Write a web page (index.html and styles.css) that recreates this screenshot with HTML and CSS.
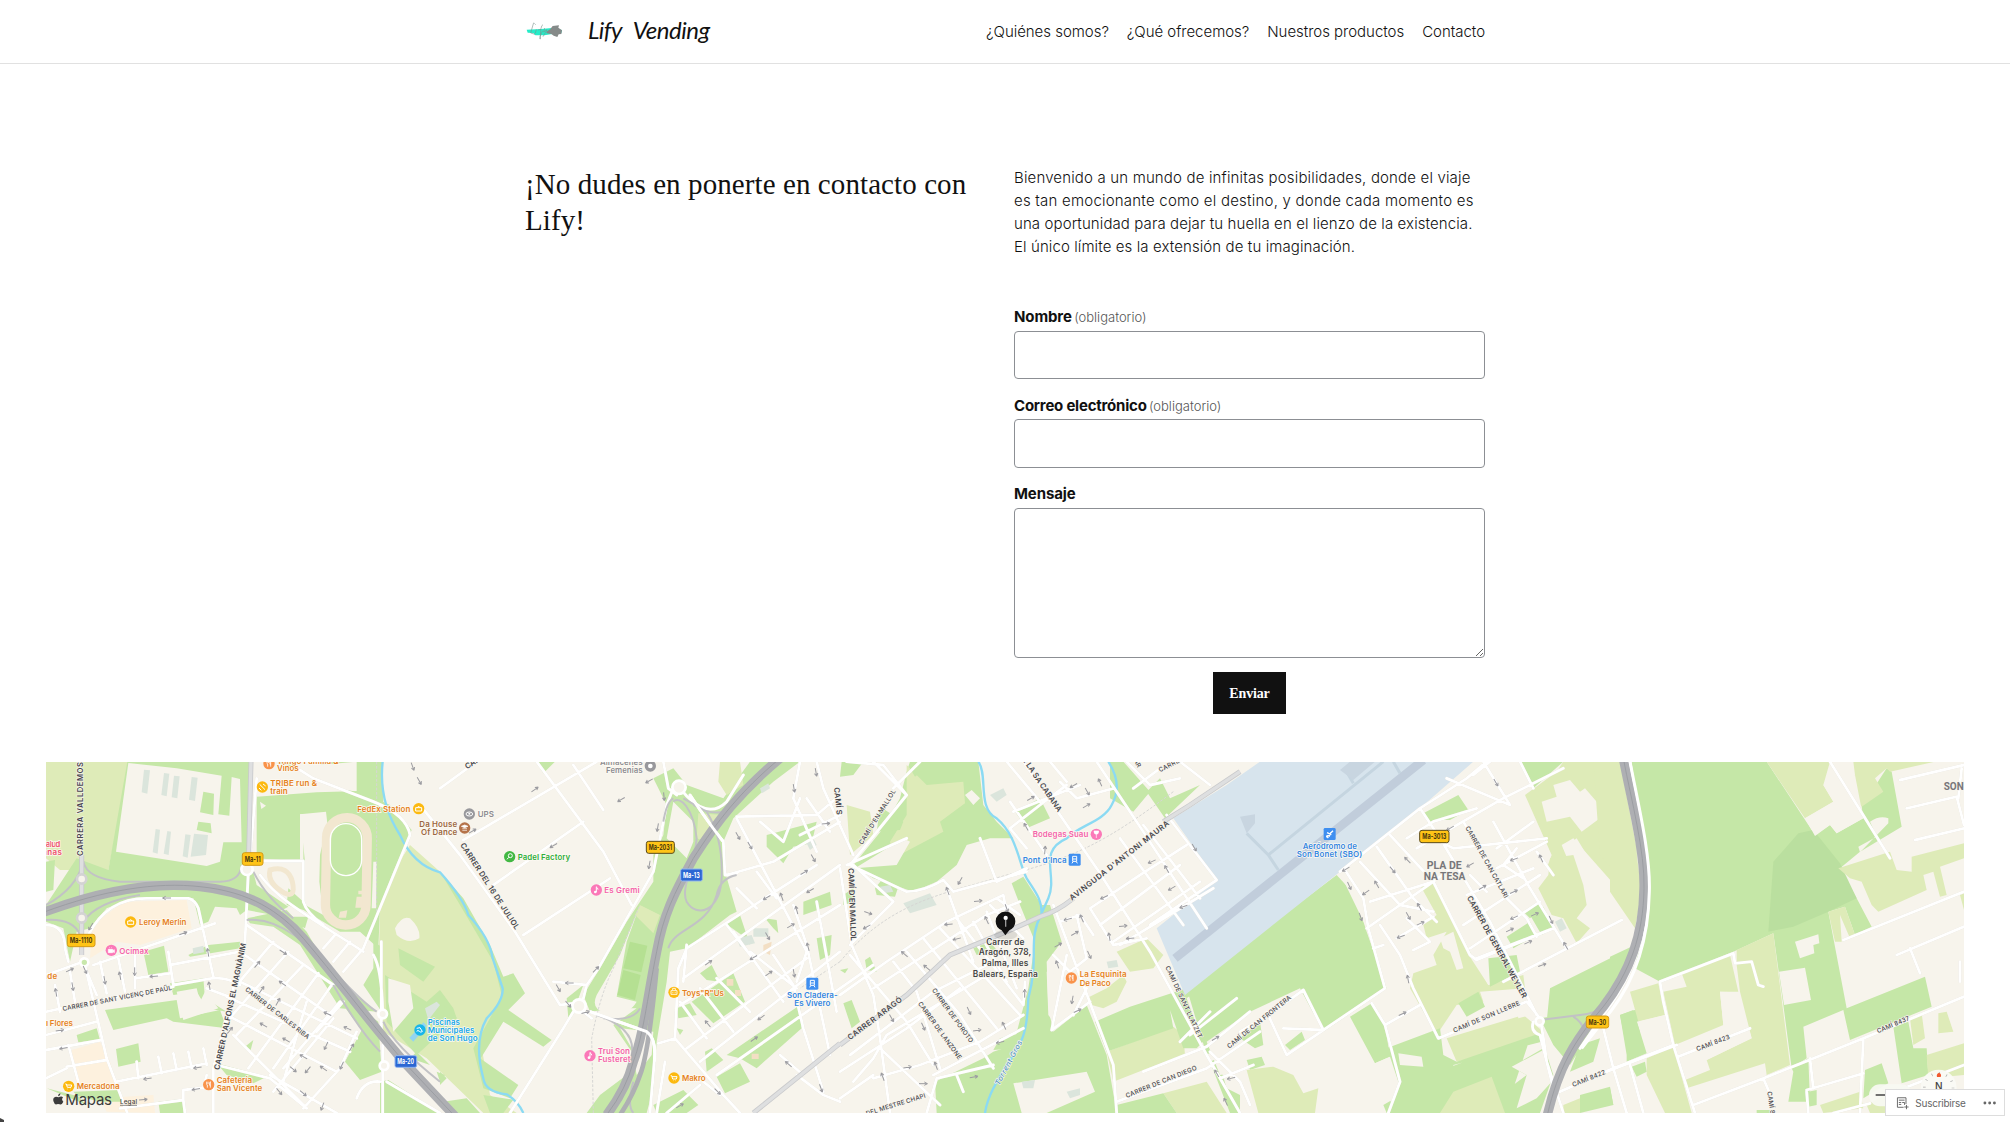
FILE: index.html
```html
<!DOCTYPE html>
<html lang="es">
<head>
<meta charset="utf-8">
<title>Contacto – Lify Vending</title>
<link rel="stylesheet" href="styles.css">
</head>
<body>
<header class="site-header">
  <div class="wrap header-row">
    <a class="brand">
      <svg class="logo" width="37" height="24" viewBox="0 0 111 72">
        <path d="M2 29L45 27L78 24L108 30L106 39L74 43L55 46L28 46L22 39L5 38Z" fill="#25ecc8"/>
        <path d="M61 35L73 27L80 18L99 16L97 23L108 31L106 42L98 43L94 51L83 47L76 42L62 40Z" fill="#858a89"/>
        <path d="M23 8L14 39L27 43M31 28L28 40M51 14Q43 15 43 57Q41 61 42 49L50 32M56 24L53 36L63 29L51 50M36 30L45 28M25 10L29 14" fill="none" stroke="#78908c" stroke-width="1.8"/>
      </svg>
      <span class="brand-name">Lify Vending</span>
    </a>
    <nav class="nav">
      <a>¿Quiénes somos?</a><a>¿Qué ofrecemos?</a><a>Nuestros productos</a><a>Contacto</a>
    </nav>
  </div>
</header>
<main>
  <section class="wrap contact">
    <h1 class="title">¡No dudes en ponerte en contacto con<br>Lify!</h1>
    <div class="side">
      <p class="intro"><span class="l1">Bienvenido a un mundo de infinitas posibilidades, donde el viaje</span><br><span class="l2">es tan emocionante como el destino, y donde cada momento es</span><br><span class="l3">una oportunidad para dejar tu huella en el lienzo de la existencia.</span><br><span class="l3">El único límite es la extensión de tu imaginación.</span></p>
      <form class="form">
        <label class="label">Nombre <span class="req">(obligatorio)</span></label>
        <input class="field" type="text">
        <label class="label label-mail">Correo electrónico <span class="req">(obligatorio)</span></label>
        <input class="field field-mail" type="email">
        <label class="label">Mensaje</label>
        <textarea class="field area"></textarea>
        <button class="send" type="button">Enviar</button>
      </form>
    </div>
  </section>
  <svg class="map" width="1918" height="351" viewBox="18 21 5754 1053">
    <defs>
      <path id="ar" d="M-13 0H12M12 0L3 -5M12 0L3 5"/>
      <g id="food"><circle r="17" fill="#f9934a"/><path d="M-6-9V-2Q-6 1-4 1V9M-2-9V-2M5 9V-9Q1-5 3 2H5" stroke="#fff" stroke-width="2.5" fill="none"/></g>
      <g id="bag"><circle r="17" fill="#fcb90f"/><path d="M-9-3H9V7H-9ZM-4-3Q0-12 4-3" fill="none" stroke="#fff" stroke-width="3"/></g>
      <g id="cart"><circle r="17" fill="#fcb90f"/><path d="M-10-7H-7L-4 3H7L9-4H-6M-3 8H-2M5 8H6" fill="none" stroke="#fff" stroke-width="3"/></g>
      <g id="music"><circle r="17" fill="#fb78b8"/><path d="M0-10V6M0-9Q5-6 5-1" fill="none" stroke="#fff" stroke-width="3"/><circle cx="-3" cy="6" r="4" fill="#fff"/></g>
      <g id="train"><rect x="-18" y="-18" width="36" height="36" rx="4" fill="#3f8ff0"/><path d="M-6-10H6V5H-6ZM-5-2H5M-5 6L-8 11M5 6L8 11" fill="none" stroke="#fff" stroke-width="3"/></g>
    </defs>
    <rect x="0" y="0" width="5800" height="1100" fill="#f7f4ec"/>

    <!-- parks and fields, west -->
    <g>
      <path class="y" d="M18 20H270L205 345L60 345L18 310Z"/>
      <path class="g" d="M262 20H632V320L650 390L745 455L700 480L620 465L600 480L590 460L525 455L505 500L480 510L460 430H280L200 460L150 520L110 530L90 620L70 520L18 500V450L110 310L205 345Z M18 320L45 315L40 405L18 410Z"/>
      <path class="b" d="M265 24L410 40L545 62L535 178L568 182L575 66L600 72L605 262L550 262L540 320L500 333L228 290Z"/>
      <path class="g" d="M490 110L522 116L520 180L480 172ZM475 200L512 205L515 235L470 225Z"/>
      <path class="p" d="M312 44L330 46L322 116L305 112ZM372 54L388 56L380 124L364 120ZM402 62L419 64L412 130L395 127ZM455 66L473 68L465 138L447 134ZM347 222L360 224L353 296L338 292ZM382 228L393 230L386 300L371 296ZM436 238L452 240L443 308L428 304ZM462 236L504 240L498 300L452 305Z"/>
      <path class="g" d="M650 125L830 112L960 108L1050 150L1115 225L1060 350L1020 460L1015 580L960 530L900 530L790 465L740 450L745 400L790 440V320L650 310ZM780 178V320H790V178Z"/>
      <path class="g" d="M715 20H760L740 50ZM850 20H1028L1030 140L1000 150L890 100L950 110L950 20L840 30Z"/>
      <path class="b" d="M780 178L858 170L862 205L840 300L838 380L850 480L795 450V320ZM1000 320H1010L1008 460H995ZM660 140L678 152L664 162Z"/>
      <path class="y" d="M1110 270L1200 350L1290 470L1360 600L1390 720L1320 850L1350 1020L1430 1074H1330L1160 910L1030 830L1015 650L1020 470L1060 350Z"/>
      <path class="g" d="M1075 580L1185 635L1150 680L1080 630ZM1035 660L1160 740L1200 705L1240 760L1250 790L1130 900L1040 800ZM1130 890L1170 930L1110 910ZM1190 950L1215 960L1200 980Z"/>
      <path class="b" d="M1065 520Q1085 480 1110 490Q1142 520 1138 550Q1105 570 1070 540ZM1045 670L1110 690L1120 760L1060 830L1045 740Z"/>
      <path class="g" d="M620 490L740 465L800 530L870 650L1010 770L900 760L780 570L700 515L630 505ZM865 690L1015 800L1025 950L960 975L915 920L965 825ZM760 485L805 485L795 520L765 505ZM970 690L1000 640V560L1025 575V770ZM1045 975L1200 1074H1020V980Z"/>
      <path class="c" d="M185 490L250 440L440 435L455 520L300 570L230 560L150 610L155 530ZM95 885L180 860L210 920L230 985L110 1000ZM180 1030L340 1020L345 1074L200 1070Z"/>
      <path class="g" d="M310 590L372 572L385 650L325 660ZM195 765L410 735L420 790L540 765L560 820L400 800L380 790L220 825ZM390 685L490 670L495 730L560 770L500 760L470 710L400 720ZM110 840L170 820L180 855L115 862ZM228 882L295 865L302 920L235 935ZM530 925L680 965L640 985L560 960ZM615 875L640 855L632 885ZM20 1000L140 1050L100 1010L240 1005L250 1040L180 1040ZM355 1040L425 1032L435 1074H360ZM445 600L505 570L600 560V580L450 605Z"/>
      <path class="b" d="M410 710L470 700L480 740L495 710L535 760L430 795Z"/>
      <g fill="none" stroke="#f2e7d0" stroke-width="28"><rect x="858" y="188" width="122" height="322" rx="61" transform="rotate(1 916 350)"/><rect x="871" y="206" width="94" height="156" rx="47" stroke="#fff" stroke-width="4"/><path d="M690 345Q745 330 757 380Q768 430 735 415Q680 385 690 345Z" stroke-width="15"/></g>
      <path fill="#f2e7d0" d="M950 425H968V458H946ZM900 470L922 466L918 488L896 488ZM955 407H967V418H955Z"/>
      <path class="p" d="M458 580L490 572L492 592L460 598ZM1155 760L1190 740L1200 750L1165 795Z"/>
      <path fill="#93d5f0" d="M1140 815L1150 802L1160 812L1120 860L1108 848Z"/>
    </g>
    <!-- centre west -->
    <g transform="translate(1200 0)">
      <path class="g" d="M0 350L70 430L150 570L190 665L220 655L255 715L205 765L335 855L310 875L190 800L125 905L120 910L235 990L210 1030L130 1000L100 880L150 790L185 720L160 620L60 450Z"/>
      <path class="g" d="M0 750Q40 760 50 790L20 810L0 780ZM0 950L20 970L0 990ZM130 1020L220 1034L190 1074H150ZM10 1040L80 1030L120 1074H40ZM290 20H345L310 55Z"/>
      <path class="g" d="M640 70L700 40L740 90L850 130L930 20H1080L1000 80L880 190L850 260L855 350L890 470L870 480L740 580L690 590L680 680L665 770L650 860L640 1000L620 1074H440L480 1020L560 960L575 890L520 810L590 760L530 760L450 770L430 720L480 640L560 500L600 440L640 380L640 300L670 240L680 150ZM380 730L430 690L410 745L385 790Z"/>
      <path class="b" d="M700 140L760 200L760 260L740 310L680 250ZM540 820L640 830L635 900L590 960L575 880ZM560 560L600 450L540 600L470 720Q450 765 500 775Q560 790 590 740L530 725Z"/>
      <path class="y" d="M840 20H900L910 90L860 120L835 80ZM775 175L850 180L800 260L770 250ZM600 450L660 480L640 535L585 480Z"/>
      <path fill="#b5e092" d="M570 560L622 572L604 652L550 640ZM550 645L602 660L585 735L532 720Z"/>
      <path class="g" d="M980 240L1130 200L1115 265L1060 275L1030 325L980 275ZM1090 440L1170 410L1175 450L1090 480ZM1130 550L1175 540L1170 600L1140 615ZM975 490L1010 495L1015 535L1000 520ZM855 505L900 480L930 570L905 540ZM780 655L815 630L840 680L800 675ZM755 740L880 655L915 740L820 805ZM710 760L750 745L770 780L715 790ZM860 900L1080 750L1085 820L950 940L900 910ZM830 965L900 925L930 980L855 1015ZM795 890L815 880L850 915L800 950ZM710 820L730 825L720 840ZM640 1050L730 1005L775 1050L740 1074H650Z"/>
      <path fill="#f3dfc4" d="M860 672H880V692H860ZM885 705H903V723H885ZM935 896H956V912H935ZM970 570L995 560L990 600L970 590Z"/>
      <path class="p" d="M890 550L935 540L945 565L900 575ZM1100 265L1120 250L1130 270L1110 285ZM960 100L985 85L990 100L965 115ZM940 520H985V545H940Z"/>
    </g>
    <!-- centre -->
    <g transform="translate(2400 0)">
      <path class="g" d="M180 130L200 50L210 20H415L430 150L470 200L520 250L450 250L380 270L350 330L290 380L220 410L100 370L40 330L130 220Z"/>
      <path class="y" d="M200 30L260 90L370 80L375 145L300 200L310 230L160 310L150 260L200 180ZM20 150L90 170L100 240L30 300Z"/>
      <path class="b" d="M375 120L395 105L420 130L400 150ZM45 340L190 250L210 260L170 330Z"/>
      <path class="g" d="M5 20H70L40 60L0 65ZM210 20H245L250 45L225 65L210 40ZM120 155L190 200L180 225L110 230ZM105 400L125 375L175 395L165 425L110 420ZM10 420L40 400L45 440L10 450ZM75 615L90 605L110 650L80 645ZM10 745L35 735L60 800L35 820ZM0 645L25 640L15 655Z"/>
      <path class="g" d="M515 385L550 365L605 450L630 450L665 560L620 620L625 760L640 830L740 750L800 900L830 1074H290L285 980L430 910L460 890L520 870L565 700L585 560L540 450ZM400 580L450 560L470 585L410 600Z"/>
      <path class="g" d="M525 170L600 130L630 190L560 220ZM810 20H850L930 110L880 170L810 130ZM920 110L960 70L990 130L1080 90L975 190ZM480 850L560 830L530 880L460 885Z"/>
      <path class="b" d="M520 985L740 950L765 1010L620 1074H545ZM620 650L660 660L640 800L625 780ZM960 520L970 550L940 580L910 560Z"/>
      <path class="p" d="M450 120L490 100L500 120L470 140ZM120 395L150 390L160 410L130 415ZM800 620L830 615L835 635L805 640ZM545 980L585 975L580 1000L550 1000ZM680 1010L720 1000L720 1020L690 1030ZM190 445L270 415L290 450L210 475Z"/>
      <path class="y" d="M830 590L920 550L970 600L940 640L870 650ZM740 730L800 700L850 660L860 680L830 740L790 760L755 750ZM800 890L1000 815L1030 840L1035 900L910 945L820 980ZM970 1015L1100 980L1160 1074H1010Z"/>
      <path class="g" d="M765 800L870 755L1040 700L1100 850L1070 880L1030 880L990 765L1000 820L800 890ZM830 1050L970 1015L1010 1074H830ZM1120 780L1200 720V600L1300 520L1520 690L1480 740L1230 890L1200 780L1140 820ZM1110 920L1130 900L1160 1000L1200 1020V1074H1170ZM1040 590L1200 610L1130 660L1060 730Z"/>
      <path class="b" d="M1040 730L1140 655L1190 720L1080 840ZM1100 830L1180 790L1200 800V880L1110 920Z"/>
    </g>
    <!-- aerodrome -->
    <g transform="translate(3600 0)">
      <path class="g" d="M-160 700L290 360L345 420L380 530L440 700L250 830L190 700L-100 900Z"/>
      <path fill="#d7e4ed" d="M-200 190L-40 90L60 20H700L540 160L300 350L-165 720L-250 520L-70 375Z"/>
      <path fill="none" stroke="#c1cddb" stroke-width="26" d="M-195 610L550 15"/>
      <path fill="none" stroke="#c5d5e0" stroke-width="9" d="M20 235L85 300L115 345M85 300L430 20M320 50L340 85M460 20L480 55"/>
      <path fill="#c8d5e0" d="M300 45L330 20H405L340 75ZM0 185L45 178V205L20 235Z"/>
    </g>
    <!-- east -->
    <g transform="translate(3600 0)">
      <path class="b" d="M540 160L720 20H840L1030 560L700 690L690 980L450 1074H300L460 980L430 820L400 740L440 700L380 520L300 355Z"/>
      <path class="b" d="M-100 860L30 770L180 700L250 830L390 745L460 930L480 990L430 1040L190 1010L100 940L0 950L-60 960Z"/>
      <path class="g" d="M550 175L655 120L685 165L630 195L585 195L565 205ZM840 20H970L880 100Z"/>
      <path class="y" d="M970 20H1140L1190 280L1195 470L1000 250L965 270L990 330L920 340L935 300L855 120L950 50Z"/>
      <path class="b" d="M905 140L950 125L940 90L990 75L1020 110L1035 100L1100 175L1025 230L990 185L920 200ZM970 280L1010 250L1150 480L1060 540L1010 490L1045 450L1020 380Z"/>
      <path class="y" d="M930 310L1000 300L1030 390L1040 450L1010 490L1050 520L1010 565L970 490L935 480L895 400L925 360ZM540 390L575 380L745 690L850 660L855 700L720 710L730 740L650 750L590 840L510 700L520 655L590 630L580 600L620 530L560 550L550 510L590 480ZM620 850L850 780L910 830L900 860L650 920Z"/>
      <path class="b" d="M600 550L640 530L670 640L650 645L630 590L610 580ZM680 590L720 610L770 680L745 690ZM830 760L880 760L870 780L835 790Z"/>
      <path class="g" d="M800 545L870 500L890 540L820 580ZM870 480L910 455L940 520L905 540ZM850 470L895 445L905 460L870 490ZM745 610L830 600L840 650L750 695ZM655 745L715 710L735 755L680 785ZM930 700L1180 575L1195 600L1080 760L920 800Z"/>
      <path class="g" d="M440 880L600 820L610 900L650 920L900 835L940 960L900 1074H790L820 990L860 960L815 935L910 880L905 860L640 930L620 1074H445L475 990ZM330 785L395 745L435 810L450 905L405 925ZM0 850L60 800L70 870L45 880ZM20 915L65 905L75 930L30 945ZM135 870L185 830L195 855L150 885ZM900 790L1080 760L1040 850L990 930L940 870ZM1020 870L1080 850L1060 920L990 950ZM1140 780L1200 760V900L1165 905ZM1020 1020L1110 995L1120 1050L1020 1074ZM430 1050L620 940L870 850L820 1000L850 1074H440Z"/>
      <path class="y" d="M20 945L100 935L160 960L190 1015L235 1000L225 1074H55ZM640 1010L755 965L795 1074H600ZM970 1050L1020 1030V1074H970ZM1060 20H1140L1200 400V440L1080 300Z"/>
      <path class="b" d="M475 895L545 905L550 935L480 930ZM370 940L450 905L475 980L455 1040L370 1010ZM355 968H380V982H355ZM815 935L910 885L935 980L890 1030L830 1060L860 960Z"/>
      <path class="p" d="M945 500L965 490L980 520L960 530Z"/>
    </g>
    <g transform="translate(4710 0)">
      <path class="g" d="M60 20H470L615 240L660 210L680 235L760 190L755 155L830 40L845 50L875 215L750 290L690 340L740 430L785 515L735 540L705 455L655 470L710 760L945 665L965 755L720 855L700 765L580 815L590 910L545 940L520 750L490 535L370 590L150 680L75 640L110 420Z"/>
      <path fill="#badf9f" d="M490 320L565 235L610 225L690 325L740 430L655 470L550 515L475 530Z"/>
      <path class="y" d="M470 20H660L640 90L670 140L585 190ZM730 20H975L840 50L830 40L795 70L820 110L755 155L700 90L735 60ZM685 340L840 290L860 345L905 350L905 305L1062 265V310L990 335L1010 420L990 425L970 350L940 360L950 405L805 470L785 450L755 380L720 370ZM655 470L705 455L735 540L720 550L690 480L695 560L675 560ZM380 585L490 535L540 930L470 960L465 925L230 1000L225 975L300 945L290 915L425 850L390 710L380 630ZM60 710L145 685L165 780L85 800ZM160 710L230 695L215 655L360 600L385 710L330 710L340 810L195 870ZM110 910L190 875L245 1074H165L110 960ZM0 20H30L80 300L95 410L75 520L0 410Z"/>
      <path class="b" d="M555 560L625 538L628 565L610 570L613 595L570 610ZM507 650L585 638L603 735L522 750ZM745 275L800 245L780 200Q810 180 835 190V205L750 292ZM585 190L670 140L640 90L735 60L760 190L680 235L660 210L615 243ZM80 800L165 780L185 870L110 895ZM330 710L385 712L425 850L290 915L340 810Z"/>
      <path class="g" d="M30 780L70 765L110 895L50 920L50 900ZM0 605L75 570L45 660L0 720ZM65 935L105 920L110 950L80 965ZM545 940L595 910L600 1040L535 1040L550 950ZM595 1010L620 1005V1050L595 1055ZM765 945L815 925L835 985L760 1030ZM850 815L895 800L910 880L950 880L955 960L875 985ZM440 1065H495V1074H440ZM0 1000L10 1050H0Z"/>
      <path class="y" d="M900 790L935 775L945 850L910 870ZM985 775L1010 770L1030 830L985 835ZM950 900L1062 865V960L955 970ZM630 1050L750 1010L760 1060L640 1074ZM770 1050L860 1000L900 1074H780ZM1050 420L1062 415V465Z"/>
    </g>

    <!-- water -->
    <path class="river" d="M1028 20Q1015 140 1080 240Q1120 330 1200 352Q1270 430 1285 480Q1350 550 1358 610L1388 700Q1390 740 1340 790Q1300 860 1330 970Q1335 1010 1400 1018Q1435 1040 1450 1074M2815 20C2845 60 2810 160 2870 190C2930 240 2935 320 2960 370C2985 410 3005 430 3005 475C2960 560 3000 600 2965 730C2960 880 2930 870 2860 1000Q2840 1040 2835 1074M3205 20Q3250 90 3215 150C3190 200 3120 210 3080 250C2990 290 3055 360 3025 430L3000 485"/>
    <path class="rail" d="M1010 20V500M1660 1074L1655 850Q1680 720 1720 640L1800 450M2400 620C2550 440 2700 420 2900 360C3100 310 3200 260 3400 110M2400 620L2280 700"/>

    <!-- streets -->
    <g class="street">
      <path d="M625 350L615 560L560 780L520 940V1074M130 610L200 910L262 1074M145 540Q200 430 320 430H445Q465 435 475 460L520 665M160 630L525 505M130 625L170 720M390 630L600 590M385 590L400 690L515 670Q560 665 600 690M285 670L390 655M285 600V700M400 695L200 730L20 770M45 690L60 770M90 650L105 740M180 620L200 715M235 610L255 710M18 660L130 620M18 510Q75 510 75 580L85 620M18 840L170 800M18 885L185 855M80 935L200 915M85 870L120 1000M18 970L80 940M230 980L500 925M290 920L295 970M355 905L365 955M400 895L410 945M445 890L455 940M490 880L500 930M500 960L490 1000M240 1060L430 1035L430 1005L520 995M430 1035L435 1074M620 510L880 690M600 590L870 780M600 680L950 850M560 725L930 890M560 780L890 950M580 840L800 1060M700 560L590 690M745 590L560 800M790 630L590 840M835 655L625 940M875 690L700 940M900 740L730 940M880 790L700 1010M950 830L900 940L790 1060M800 740L730 980M690 960L890 1074M530 930L690 970M500 700L580 730M660 360C720 440 800 480 970 590M668 318H790V440Q800 475 850 510M970 580L910 650M930 560L880 620M885 540L850 580M970 580L1110 240Q1100 180 1000 140L820 70L780 45M1000 600Q1025 640 1028 770M1024 560V850M650 70L635 250L625 350M1028 870V1074M800 1060L690 970M910 740L830 830M950 1030Q970 975 1020 980M1040 980L1200 1074"/>
      <path d="M1140 150L1260 300L1425 530L1560 750L1600 745L1655 790M1270 255L1670 20M1360 390L1630 200M1450 540L1710 370M1490 20L1690 290L1775 450M1600 30L1690 165M1200 100L1310 20M1410 1074L1570 820L1600 770M1540 680L1640 690L1675 640L1840 350L1860 250L1880 150L1900 100M1640 690L1630 730M1870 20L1885 100L1910 120M1950 120Q2010 210 2050 260L2055 360L2090 355M1920 100Q2000 200 2060 140L2110 60M1650 770L1820 830Q1850 850 1843 920L1830 1074M1875 920L1850 1074M2090 185L2330 180L2400 120M2090 190L2300 590L2270 680M2060 360L2200 320L2400 200M1930 670L2400 330M1940 580L2330 330M1920 750L2400 450M1930 680L1940 570M1905 850L1915 640L1940 580M1855 865L1905 850L2050 1020L2100 1074M1940 880L2300 610M1980 920L2400 590M2030 960L2500 630M1920 740L2000 850M1980 700L2080 830M2030 670L2130 770M2080 530L2230 740M2130 590L2270 700M2200 600L2260 690L2290 820L2350 1010M2260 450L2300 570L2370 900M2330 440L2390 770M2060 510L2130 600M2090 400L2150 460M2150 350L2210 430M2160 200L2230 260L2280 130M2280 20L2260 130L2330 290M2330 20L2350 100L2440 300M2400 180L2280 240M2300 130L2370 230M2220 900L2290 960M2270 960L2350 1020L2400 1040M2040 1020L1990 980M1880 1074L1980 990"/>
      <path d="M2500 20L2600 120L2430 330M2640 20L2560 100M2420 20L2530 30L2600 120M2420 330L2600 250M2430 330L2600 410Q2650 410 2710 375L2740 410L2960 350M2440 330L2560 440L2430 570M2400 340L2435 570L2500 720L2520 850L2550 1074M2430 600L2600 800L2680 930M2400 720L2540 620L2720 500L2890 420L2900 470M2500 700L2840 480L2940 440M2560 620L2630 710L2700 940M2600 590L2760 780L2860 940M2650 550L2870 820M2700 520L2940 780M2750 490L2950 750L2955 680M2840 470L2930 700M2800 500L2900 680M2400 950L2600 820L2760 700M2430 900L2680 710L2860 620M2500 970L2640 930M2540 840L2840 660M2640 930L2820 860L2950 780M2680 960L2950 820M2660 1074L2690 970L2860 930M2750 960L2770 1010M2400 1030L2500 960M2440 980L2500 910L2540 840M2520 880L2700 1050M2720 400L2800 620M2850 450L2950 550M2870 430L2940 480M2820 250L2870 380L2960 340M2910 140L3020 300M2920 170L3120 90M2950 20L3170 340L3330 590L3500 900L3600 1074M3170 20L3290 200L3500 520M3040 450L3220 930L3230 1074M3150 460L3300 360L3440 270M3180 510L3420 330M3220 560L3480 380M3240 570L3520 400M3380 180L3530 375L3330 510M3240 250L3430 510M3310 210L3480 430M3150 460L3220 570L3320 550M3110 480L3140 610L3090 650L3040 600M3060 500L3120 480L3160 540M3080 600L3035 825L3150 740M3100 780L3140 700M3310 950L3500 875L3630 770M3230 1040L3500 940L3660 830M3540 970L3640 930M3510 890L3600 980L3630 1050M3260 20L3330 90L3420 70M3280 100L3360 40M3420 20L3510 90M2960 280L2910 220L3000 150L3080 90M3060 80L3110 130L3220 100M2900 20L3000 140M3030 20L3080 80M3450 840L3590 730M3420 860L3510 770"/>
      <path d="M3915 345L3970 430L3985 520L4035 700L3740 900L3680 770M3730 820L3850 825L3790 705L3700 770L3600 830M3900 350L4140 160L4280 70L4340 20M3960 320L4080 450L4180 470M3990 440L4180 380L4260 320M3980 520L4180 380M4010 275L4120 430L4190 500M4050 240L4180 380L4290 600L4310 615L4540 520M4140 160L4200 250L4350 500L4490 780M4100 250L4180 200L4310 160M4130 280L4390 130L4570 40M4200 260L4240 280L4520 250M4270 200L4320 280L4400 430L4460 490L4490 545M4360 200L4470 400L4580 580M4280 420L4480 340M4270 510L4500 360M4290 580L4500 440M4310 610L4540 520M4220 70L4410 150M4330 20L4410 150M4440 20L4480 100M4450 370L4390 330L4430 280M4370 280L4480 200M4490 290L4540 360M4520 260L4370 340M4340 410L4290 360M4020 510L4080 600L4120 700L4195 850L4460 740L4500 790Q4510 840 4520 920L4570 1074M4390 680L4745 495M4000 580L4030 570M4120 585L4170 560L4100 490M4070 550L4180 485M3995 745L4035 810L4080 980L4045 1074M4035 810L4140 750M4350 20L4300 60M4690 820L4720 940L4760 1074M4560 1010L4720 940L4900 870M4770 930L4810 1074M4480 800Q4470 830 4500 840L4540 1000M4620 880L4690 780Q4790 650 4815 500Q4830 400 4770 20"/>
      <path d="M5370 20L5550 310M5580 75L5772 30M5600 160L5750 125L5772 210M5625 255L5772 220M5410 555L5772 410M5570 600L5772 515M5610 580L5640 655M5772 725L5470 850L5170 970L4960 1050M5470 850L5460 1074M5310 910L5320 1000M4860 680L5080 595L5085 625L5135 620L5155 690L5170 695M4860 680L4870 740L4900 870L4965 1074M4915 905L5130 820M5170 970L5200 1040M5300 1005L5470 955M5300 1010L5305 1074M5380 1074L5490 1045M5760 620V680M5765 40L5755 130M4910 870L4700 950M5772 930L5590 1000"/>
    </g>

    <!-- slip roads and ring roads -->
    <g class="slip">
      <path d="M18 450Q110 400 130 320Q140 370 240 380H540Q600 380 605 330M130 500Q170 440 300 420M18 495Q100 490 120 540M640 350Q680 430 760 490M620 495C780 480 900 700 1010 770M880 690Q960 830 1020 890M1030 800Q1060 870 1200 980M1900 140C1920 120 1960 160 1970 250C1965 330 1920 400 1940 440C1970 490 2040 470 2045 370Q2050 250 2000 170L1930 130M1885 580C1900 520 2000 520 2030 420Q2040 370 2090 360M1690 790Q1780 800 1800 760M1670 780Q1790 820 1775 900M1900 130Q1880 140 1870 200M1960 150Q2010 180 2050 170M1780 1074Q1760 1050 1780 980M4500 795L4620 780Q4670 775 4700 750M4600 785Q4640 810 4625 840"/>
    </g>
    <path class="trunk" d="M125 300V600M633 20L625 340M2400 870L2600 720L2730 600L2900 530L3000 485Q3050 470 3100 430M3370 200L3450 150L3600 50M2140 1074L2400 865"/>
    <path class="trunk-top" d="M125 300V600M633 20L625 340M2400 870L2600 720L2730 600L2900 530L3000 485Q3050 470 3100 430M3370 200L3450 150L3600 50M2140 1074L2400 865"/>
    <path class="mway" d="M10 472C190 405 350 380 480 395C630 410 720 470 790 550C880 655 980 790 1100 930L1245 1084M2220 10C2100 110 2030 200 1960 310C1900 420 1870 480 1850 590C1820 740 1810 840 1780 920Q1760 1000 1700 1080M4750 10C4775 140 4815 290 4812 400C4810 540 4770 650 4690 755C4600 860 4555 940 4522 1080"/>
    <path class="mway mway-side" d="M1850 640Q1825 900 1800 960Q1780 1020 1740 1080"/>
    <path class="mway-line" d="M10 472C190 405 350 380 480 395C630 410 720 470 790 550C880 655 980 790 1100 930L1245 1084M2220 10C2100 110 2030 200 1960 310C1900 420 1870 480 1850 590C1820 740 1810 840 1780 920Q1760 1000 1700 1080M4750 10C4775 140 4815 290 4812 400C4810 540 4770 650 4690 755C4600 860 4555 940 4522 1080"/>
    <path d="M4770 20C4795 150 4832 300 4828 410C4825 560 4780 680 4715 765L4625 880M1650 770L1820 830Q1850 850 1843 920M1950 120Q2010 210 2050 260" fill="none" stroke="#fff" stroke-width="9"/>
    <g fill="#f7f4ec" stroke="#d3d3d3" stroke-width="8"><circle cx="125" cy="372" r="14"/><circle cx="125" cy="489" r="14"/></g>
    <g fill="#f7f4ec" stroke="#fff" stroke-width="8"><circle cx="133" cy="622" r="12" fill="#c9e8ac"/><circle cx="621" cy="343" r="17"/><circle cx="1028" cy="777" r="13"/><circle cx="1032" cy="932" r="13"/><circle cx="1917" cy="97" r="20"/><circle cx="1617" cy="753" r="20"/><circle cx="4499" cy="799" r="12"/></g>

    <!-- one-way arrows -->
    <g class="arrows">
      <use href="#ar" transform="translate(380 429) rotate(180)"/><use href="#ar" transform="translate(152 515) rotate(120)"/><use href="#ar" transform="translate(430 535) rotate(-20)"/><use href="#ar" transform="translate(504 592) rotate(-100)"/><use href="#ar" transform="translate(90 645) rotate(-25)"/><use href="#ar" transform="translate(135 645) rotate(65)"/><use href="#ar" transform="translate(48 712) rotate(-100)"/><use href="#ar" transform="translate(98 695) rotate(80)"/><use href="#ar" transform="translate(194 676) rotate(80)"/><use href="#ar" transform="translate(240 662) rotate(-100)"/><use href="#ar" transform="translate(284 650) rotate(90)"/><use href="#ar" transform="translate(341 664) rotate(174)"/><use href="#ar" transform="translate(508 692) rotate(-100)"/><use href="#ar" transform="translate(60 826) rotate(-10)"/><use href="#ar" transform="translate(70 880) rotate(170)"/><use href="#ar" transform="translate(322 971) rotate(170)"/><use href="#ar" transform="translate(472 938) rotate(170)"/><use href="#ar" transform="translate(310 1034) rotate(-5)"/><use href="#ar" transform="translate(467 1003) rotate(170)"/>
      <use href="#ar" transform="translate(652 628) rotate(-50)"/><use href="#ar" transform="translate(730 592) rotate(33)"/><use href="#ar" transform="translate(665 704) rotate(-55)"/><use href="#ar" transform="translate(727 685) rotate(-145)"/><use href="#ar" transform="translate(714 740) rotate(-60)"/><use href="#ar" transform="translate(862 776) rotate(-155)"/><use href="#ar" transform="translate(670 810) rotate(-150)"/><use href="#ar" transform="translate(922 820) rotate(-155)"/><use href="#ar" transform="translate(570 826) rotate(-50)"/><use href="#ar" transform="translate(738 855) rotate(-150)"/><use href="#ar" transform="translate(858 873) rotate(115)"/><use href="#ar" transform="translate(790 905) rotate(-150)"/><use href="#ar" transform="translate(760 943) rotate(40)"/><use href="#ar" transform="translate(803 945) rotate(130)"/><use href="#ar" transform="translate(850 940) rotate(-145)"/><use href="#ar" transform="translate(935 877) rotate(-60)"/><use href="#ar" transform="translate(905 932) rotate(115)"/><use href="#ar" transform="translate(718 1010) rotate(50)"/><use href="#ar" transform="translate(790 1015) rotate(40)"/><use href="#ar" transform="translate(847 1055) rotate(110)"/>
      <use href="#ar" transform="translate(1118 35) rotate(70)"/><use href="#ar" transform="translate(1138 78) rotate(60)"/><use href="#ar" transform="translate(1298 228) rotate(-30)"/><use href="#ar" transform="translate(1485 103) rotate(-35)"/><use href="#ar" transform="translate(1540 272) rotate(150)"/><use href="#ar" transform="translate(1827 78) rotate(150)"/><use href="#ar" transform="translate(1743 134) rotate(150)"/><use href="#ar" transform="translate(1872 125) rotate(85)"/><use href="#ar" transform="translate(1853 218) rotate(100)"/><use href="#ar" transform="translate(1828 330) rotate(100)"/><use href="#ar" transform="translate(1588 684) rotate(180)"/><use href="#ar" transform="translate(1668 643) rotate(-45)"/><use href="#ar" transform="translate(1555 700) rotate(60)"/><use href="#ar" transform="translate(1585 748) rotate(50)"/><use href="#ar" transform="translate(1637 772) rotate(-15)"/><use href="#ar" transform="translate(2006 623) rotate(-35)"/><use href="#ar" transform="translate(2187 655) rotate(-35)"/><use href="#ar" transform="translate(2163 788) rotate(145)"/><use href="#ar" transform="translate(2143 852) rotate(-35)"/><use href="#ar" transform="translate(2003 806) rotate(-130)"/><use href="#ar" transform="translate(2033 1010) rotate(45)"/><use href="#ar" transform="translate(1920 1052) rotate(-30)"/><use href="#ar" transform="translate(2245 927) rotate(-140)"/><use href="#ar" transform="translate(2343 1000) rotate(70)"/>
      <use href="#ar" transform="translate(2094 243) rotate(60)"/><use href="#ar" transform="translate(2130 272) rotate(60)"/><use href="#ar" transform="translate(2293 352) rotate(-30)"/><use href="#ar" transform="translate(2320 310) rotate(60)"/><use href="#ar" transform="translate(2328 52) rotate(80)"/><use href="#ar" transform="translate(2262 100) rotate(80)"/><use href="#ar" transform="translate(2358 206) rotate(-5)"/><use href="#ar" transform="translate(2180 428) rotate(150)"/><use href="#ar" transform="translate(2225 425) rotate(-110)"/><use href="#ar" transform="translate(2310 407) rotate(150)"/><use href="#ar" transform="translate(2270 465) rotate(-105)"/><use href="#ar" transform="translate(2253 512) rotate(-30)"/><use href="#ar" transform="translate(2183 544) rotate(60)"/><use href="#ar" transform="translate(2140 608) rotate(150)"/><use href="#ar" transform="translate(2262 655) rotate(80)"/><use href="#ar" transform="translate(2304 575) rotate(-105)"/>
      <use href="#ar" transform="translate(2485 474) rotate(20)"/><use href="#ar" transform="translate(2480 516) rotate(150)"/><use href="#ar" transform="translate(2723 408) rotate(-110)"/><use href="#ar" transform="translate(2760 378) rotate(120)"/><use href="#ar" transform="translate(2815 438) rotate(-5)"/><use href="#ar" transform="translate(2900 460) rotate(70)"/><use href="#ar" transform="translate(2840 495) rotate(-115)"/><use href="#ar" transform="translate(2725 508) rotate(175)"/><use href="#ar" transform="translate(2750 552) rotate(165)"/><use href="#ar" transform="translate(2593 597) rotate(-140)"/><use href="#ar" transform="translate(2660 638) rotate(-140)"/><use href="#ar" transform="translate(2787 768) rotate(65)"/><use href="#ar" transform="translate(2812 826) rotate(-10)"/><use href="#ar" transform="translate(2892 812) rotate(-115)"/><use href="#ar" transform="translate(2880 862) rotate(165)"/><use href="#ar" transform="translate(2650 815) rotate(65)"/><use href="#ar" transform="translate(2555 790) rotate(60)"/><use href="#ar" transform="translate(2603 937) rotate(-10)"/><use href="#ar" transform="translate(2802 966) rotate(-10)"/><use href="#ar" transform="translate(2650 986) rotate(0)"/><use href="#ar" transform="translate(2688 932) rotate(-110)"/><use href="#ar" transform="translate(2528 965) rotate(-110)"/><use href="#ar" transform="translate(2954 715) rotate(-90)"/>
      <use href="#ar" transform="translate(2973 130) rotate(-30)"/><use href="#ar" transform="translate(3100 92) rotate(150)"/><use href="#ar" transform="translate(3142 110) rotate(60)"/><use href="#ar" transform="translate(3180 82) rotate(-115)"/><use href="#ar" transform="translate(3140 152) rotate(-30)"/><use href="#ar" transform="translate(2958 215) rotate(-120)"/><use href="#ar" transform="translate(3015 285) rotate(-85)"/><use href="#ar" transform="translate(3463 278) rotate(60)"/><use href="#ar" transform="translate(3335 320) rotate(155)"/><use href="#ar" transform="translate(3380 342) rotate(-120)"/><use href="#ar" transform="translate(3395 400) rotate(150)"/><use href="#ar" transform="translate(3192 427) rotate(155)"/><use href="#ar" transform="translate(3430 455) rotate(160)"/><use href="#ar" transform="translate(3250 513) rotate(-5)"/><use href="#ar" transform="translate(3270 550) rotate(175)"/><use href="#ar" transform="translate(3208 545) rotate(-100)"/><use href="#ar" transform="translate(3125 490) rotate(-115)"/><use href="#ar" transform="translate(3083 493) rotate(165)"/><use href="#ar" transform="translate(3055 570) rotate(-30)"/><use href="#ar" transform="translate(3105 535) rotate(-30)"/><use href="#ar" transform="translate(3148 600) rotate(65)"/><use href="#ar" transform="translate(3052 628) rotate(-110)"/><use href="#ar" transform="translate(3097 735) rotate(100)"/><use href="#ar" transform="translate(3113 767) rotate(-25)"/><use href="#ar" transform="translate(3527 850) rotate(-30)"/><use href="#ar" transform="translate(3530 955) rotate(-120)"/><use href="#ar" transform="translate(3573 970) rotate(165)"/><use href="#ar" transform="translate(3557 1040) rotate(-115)"/>
      <use href="#ar" transform="translate(3917 343) rotate(150)"/><use href="#ar" transform="translate(3928 393) rotate(65)"/><use href="#ar" transform="translate(3962 486) rotate(70)"/><use href="#ar" transform="translate(4010 388) rotate(-120)"/><use href="#ar" transform="translate(3977 413) rotate(145)"/><use href="#ar" transform="translate(4058 345) rotate(50)"/><use href="#ar" transform="translate(4102 315) rotate(-135)"/><use href="#ar" transform="translate(4105 483) rotate(60)"/><use href="#ar" transform="translate(4138 455) rotate(-120)"/><use href="#ar" transform="translate(4142 505) rotate(-25)"/><use href="#ar" transform="translate(4082 545) rotate(160)"/><use href="#ar" transform="translate(4104 672) rotate(-100)"/><use href="#ar" transform="translate(4088 776) rotate(-25)"/><use href="#ar" transform="translate(4368 83) rotate(60)"/><use href="#ar" transform="translate(4230 220) rotate(150)"/><use href="#ar" transform="translate(4290 330) rotate(150)"/><use href="#ar" transform="translate(4422 313) rotate(160)"/><use href="#ar" transform="translate(4503 310) rotate(-115)"/><use href="#ar" transform="translate(4328 397) rotate(-30)"/><use href="#ar" transform="translate(4422 410) rotate(-25)"/><use href="#ar" transform="translate(4422 488) rotate(155)"/><use href="#ar" transform="translate(4485 478) rotate(-25)"/><use href="#ar" transform="translate(4533 495) rotate(65)"/><use href="#ar" transform="translate(4410 525) rotate(-25)"/><use href="#ar" transform="translate(4465 562) rotate(-25)"/><use href="#ar" transform="translate(4577 572) rotate(-120)"/><use href="#ar" transform="translate(4507 630) rotate(-20)"/>
    </g>

    <!-- street names -->
    <g class="road">
      <text class="lg" transform="translate(129 303) rotate(-90)" textLength="282">CARRERA VALLDEMOS</text>
      <text class="sm" transform="translate(69 768) rotate(-11)" textLength="334">CARRER DE SANT VICENÇ DE PAÜL</text>
      <text class="lg" transform="translate(538 946) rotate(-78)" textLength="388">CARRER D'ALFONS EL MAGNÀNIM</text>
      <text class="sm" transform="translate(614 706) rotate(38)" textLength="238">CARRER DE CARLES RIBA</text>
      <text class="lg" transform="translate(1260 270) rotate(57)" textLength="305">CARRER DEL 16 DE JULIOL</text>
      <text class="lg" transform="translate(1281 43) rotate(-32)" textLength="60">CAMÍ</text>
      <text class="lg" transform="translate(2382 98) rotate(84)" textLength="82">CAMÍ S</text>
      <text class="sm" transform="translate(2467 270) rotate(-58)" textLength="190">CAMÍ D'EN MALLOL</text>
      <text class="lg" transform="translate(2425 340) rotate(88)" textLength="218">CAMÍ D'EN MALLOL</text>
      <text class="lg" transform="translate(2430 856) rotate(-37)" textLength="198">CARRER ARAGÓ</text>
      <text class="sm" transform="translate(2675 706) rotate(54)" textLength="196">CARRER DE POROTO</text>
      <text class="sm" transform="translate(2633 746) rotate(54)" textLength="208">CARRER DE LANZONE</text>
      <text class="sm" transform="translate(2480 1082) rotate(-17)" textLength="186">DEL MESTRE CHAPI</text>
      <text class="lg" transform="translate(2937 0) rotate(56)" textLength="208">DE LA SA CABANA</text>
      <text class="lg" transform="translate(3096 437) rotate(-38)" textLength="372">AVINGUDA D'ANTONI MAURA</text>
      <text class="sm" transform="translate(3360 52) rotate(-27)" textLength="80">CARRER</text>
      <text class="sm" transform="translate(3280 18) rotate(58)" textLength="25">AR</text>
      <text class="sm" transform="translate(3376 637) rotate(65)" textLength="236">CAMÍ DE SANT LLATZET</text>
      <text class="sm" transform="translate(3260 1029) rotate(-22)" textLength="228">CARRER DE CAN DIEGO</text>
      <text class="sm" transform="translate(3568 881) rotate(-39)" textLength="240">CAMÍ DE CAN FRONTERA</text>
      <text class="sm" transform="translate(4276 218) rotate(61)" textLength="243">CARRER DE CAN CATLARI</text>
      <text class="lg" transform="translate(4280 428) rotate(61)" textLength="346">CARRER DE GENERAL WEYLER</text>
      <text class="sm" transform="translate(4243 833) rotate(-23)" textLength="215">CAMÍ DE SON LLEBRE</text>
      <text class="sm" transform="translate(4600 996) rotate(-22)" textLength="105">CAMÍ 8422</text>
      <text class="sm" transform="translate(4972 889) rotate(-21)" textLength="106">CAMÍ 8423</text>
      <text class="sm" transform="translate(5514 835) rotate(-23)" textLength="104">CAMÍ 8437</text>
      <text class="sm" transform="translate(5182 1010) rotate(82)" textLength="105">CAMÍ 8423</text>
      <text class="sm river-name" transform="translate(2878 992) rotate(-62)" textLength="148">Torrent Gros</text>
    </g>

    <!-- places -->
    <g class="poi">
      <g fill="#e5811b">
        <text x="711" y="26" textLength="185">Tango Familia &amp;</text><text x="711" y="47" textLength="65">Vinos</text>
        <text x="691" y="92" textLength="140">TRIBE run &amp;</text><text x="691" y="116" textLength="52">train</text>
        <text x="952" y="170" textLength="159">FedEx Station</text><text x="297" y="511" textLength="142">Leroy Merlin</text>
        <text x="-20" y="673" textLength="72">rande</text><text x="18" y="812" textLength="81">ı Flores</text>
        <text x="110" y="1003" textLength="129">Mercadona</text><text x="530" y="985" textLength="106">Cafetería</text><text x="530" y="1009" textLength="137">San Vicente</text>
        <text x="1926" y="722" textLength="126">Toys"R"Us</text><text x="1926" y="978" textLength="71">Makro</text>
        <text x="3119" y="667" textLength="141">La Esquinita</text><text x="3119" y="692" textLength="93">De Paco</text>
      </g>
      <g fill="#9b6742"><text x="1138" y="216" textLength="114">Da House</text><text x="1143" y="240" textLength="109">Of Dance</text></g>
      <g fill="#ee4d6b"><text x="4" y="275" textLength="57">Salud</text><text x="-20" y="299" textLength="86">Dianas</text></g>
      <g fill="#f463aa"><text x="238" y="596" textLength="88">Ocimax</text><text x="1693" y="414" textLength="106">Es Gremi</text><text x="1674" y="898" textLength="96">Trui Son</text><text x="1674" y="922" textLength="98">Fusteret</text><text x="2978" y="247" textLength="167">Bodegas Suau</text></g>
      <g fill="#14a7e8"><text x="1163" y="809" textLength="97">Piscinas</text><text x="1163" y="834" textLength="140">Municipales</text><text x="1163" y="858" textLength="150">de Son Hugo</text></g>
      <g fill="#8c8c91"><text x="1680" y="31" textLength="128">Almacenes</text><text x="1698" y="55" textLength="110">Femenias</text><text x="1313" y="186" textLength="49">UPS</text></g>
      <text x="1433" y="315" textLength="158" fill="#2fae3b">Padel Factory</text>
      <g fill="#3386e2"><text x="2241" y="730" textLength="152">Son Cladera-</text><text x="2263" y="754" textLength="108">Es Vivero</text><text x="2948" y="324" textLength="132">Pont d'Inca</text><text x="3788" y="281" textLength="163">Aeródromo de</text><text x="3770" y="306" textLength="197">Son Bonet (SBO)</text></g>
    </g>
    <use href="#food" x="687" y="26"/><use href="#food" x="506" y="989"/><use href="#food" x="3094" y="669"/>
    <use href="#bag" x="1136" y="161"/><use href="#bag" x="272" y="501"/><use href="#cart" x="86" y="994"/><use href="#cart" x="1902" y="969"/>
    <circle cx="667" cy="96" r="17" fill="#fcb90f"/><path d="M659 88L675 104M657 99L664 106M669 87L677 93" stroke="#fff" stroke-width="3"/>
    <circle cx="1902" cy="712" r="17" fill="#fcb90f"/><path d="M1893 707H1911V718H1893ZM1898 706V700H1906V706M1897 713H1900M1904 713H1907" fill="none" stroke="#fff" stroke-width="2.5"/>
    <circle cx="214" cy="586" r="17" fill="#fb78b8"/><path d="M205 583H218V593H205ZM207 578H209M214 578H216M218 587L223 584V593L218 589" fill="#fff" stroke="#fff" stroke-width="2"/>
    <use href="#music" x="1669" y="405"/><use href="#music" x="1650" y="902"/>
    <circle cx="3169" cy="238" r="17" fill="#fb78b8"/><path d="M3162 228H3176Q3176 238 3169 238Q3162 238 3162 228M3169 238V249" fill="#fff" stroke="#fff" stroke-width="2"/>
    <circle cx="1140" cy="825" r="17" fill="#18b6ea"/><path d="M1130 820L1140 818L1146 828M1130 829Q1134 824 1138 829T1148 829" fill="none" stroke="#fff" stroke-width="3"/>
    <circle cx="1409" cy="305" r="17" fill="#42b843"/><circle cx="1411" cy="302" r="6" fill="none" stroke="#fff" stroke-width="3"/><path d="M1406 307L1401 313" stroke="#fff" stroke-width="3"/>
    <circle cx="1288" cy="177" r="17" fill="#98989c"/><ellipse cx="1288" cy="177" rx="10" ry="6" fill="none" stroke="#fff" stroke-width="3"/><circle cx="1288" cy="176" r="3" fill="#fff"/>
    <circle cx="1831" cy="33" r="17" fill="#98989c"/><circle cx="1831" cy="33" r="7" fill="#fff"/>
    <circle cx="1274" cy="219" r="17" fill="#b5734a"/><path d="M1264 214L1274 210L1284 214L1274 218ZM1267 221H1281M1267 226H1281" fill="#fff" stroke="#fff" stroke-width="2"/>
    <use href="#train" x="2317" y="686"/><use href="#train" x="3104" y="314"/>
    <rect x="3851" y="219" width="36" height="36" rx="4" fill="#3f8ff0"/><path d="M3859 247L3879 227M3861 233L3874 239M3867 245L3873 232M3859 242L3865 249" fill="none" stroke="#fff" stroke-width="4"/>

    <g class="area-name"><text x="4160" y="342" textLength="105" lengthAdjust="spacingAndGlyphs">PLA DE</text><text x="4151" y="375" textLength="125" lengthAdjust="spacingAndGlyphs">NA TESA</text><text x="5711" y="105" textLength="60" lengthAdjust="spacingAndGlyphs">SON</text></g>

    <!-- route shields -->
    <g class="shield">
      <rect x="607" y="293" width="62" height="38" rx="7"/><text x="638" y="320" textLength="48" lengthAdjust="spacingAndGlyphs">Ma-11</text>
      <rect x="82" y="538" width="83" height="37" rx="7"/><text x="123" y="564" textLength="68" lengthAdjust="spacingAndGlyphs">Ma-1110</text>
      <rect x="1819" y="259" width="84" height="36" rx="7" class="dk"/><text x="1861" y="285" textLength="70" lengthAdjust="spacingAndGlyphs">Ma-2031</text>
      <rect x="4139" y="226" width="88" height="37" rx="7" class="dk"/><text x="4183" y="252" textLength="72" lengthAdjust="spacingAndGlyphs">Ma-3013</text>
      <rect x="4639" y="783" width="67" height="36" rx="7"/><text x="4672" y="809" textLength="53" lengthAdjust="spacingAndGlyphs">Ma-30</text>
    </g>
    <g class="shield blue">
      <rect x="1065" y="902" width="65" height="35" rx="5"/><text x="1097" y="928" textLength="50" lengthAdjust="spacingAndGlyphs">Ma-20</text>
      <rect x="1922" y="342" width="65" height="36" rx="5"/><text x="1954" y="368" textLength="50" lengthAdjust="spacingAndGlyphs">Ma-13</text>
    </g>

    <!-- address pin -->
    <g>
      <ellipse cx="2897" cy="540" rx="35" ry="15" fill="#000" opacity=".1"/>
      <path d="M2896 541L2885 526Q2867 518 2867 499A29 29 0 0 1 2926 499Q2926 518 2908 526Z" fill="#111"/>
      <circle cx="2897" cy="489" r="6.5" fill="#fff"/><path d="M2897 494V515" stroke="#999" stroke-width="4"/>
      <g class="pin-name"><text x="2896" y="571" textLength="115">Carrer de</text><text x="2895" y="601" textLength="157">Aragón, 378,</text><text x="2895" y="634" textLength="140">Palma, Illes</text><text x="2896" y="667" textLength="195">Balears, España</text></g>
    </g>

    <!-- attribution and controls -->
    <path d="M56 1027Q64 1022 69 1027Q63 1034 70 1040Q65 1051 59 1048Q54 1046 50 1048Q44 1050 40 1038Q38 1026 48 1025ZM54 1024Q54 1016 61 1015Q62 1022 54 1024" fill="#3b3b3b"/>
    <text class="mapas" x="76" y="1050" textLength="140">Mapas</text>
    <text class="legal" x="240" y="1047" textLength="51">Legal</text>
    <path d="M240 1051H291" stroke="#555" stroke-width="2"/>
    <rect x="5487" y="988" width="130" height="66" rx="33" fill="#f8f9f2" opacity=".94"/><path d="M5507 1020H5535" stroke="#555" stroke-width="5"/>
    <circle cx="5696" cy="998" r="54" fill="#fafaf5" opacity=".96"/>
    <circle cx="5696" cy="998" r="43" fill="none" stroke="#aaa" stroke-width="8" stroke-dasharray="2 20.5"/>
    <path d="M5691 966Q5688 957 5697 953Q5706 957 5702 966Z" fill="#f15a30"/>
    <text class="north" x="5685" y="1006" textLength="23">N</text>
  </svg>
</main>
<aside class="subscribe">
  <svg width="14" height="14" viewBox="0 0 14 14" fill="none" stroke="#666"><path d="M10.5 8V1.5H1.5V11.5H8M3 4H9M3 6.5H5.5M6.5 6.5H9V9M3 8.5H5.5M11 9V13.5M8.7 11.2H13.2"/></svg>
  <span class="sub-text">Suscribirse</span>
  <svg width="14" height="4" viewBox="0 0 14 4" fill="#666"><circle cx="2" cy="2" r="1.5"/><circle cx="7" cy="2" r="1.5"/><circle cx="12" cy="2" r="1.5"/></svg>
</aside>
<svg class="corner" width="5" height="4" viewBox="0 0 5 4"><path d="M0 0L4 2V4H0Z" fill="#444"/></svg>
</body>
</html>
```
FILE: styles.css
```css
* { box-sizing: border-box; }
html, body { margin: 0; height: 1122px; overflow: hidden; background: #fff; }
body { position: relative; color: #111; font-family: "Inter", "Liberation Sans", sans-serif; }
.wrap { width: 960px; margin: 0 auto; }
.site-header { height: 64px; border-bottom: 1px solid #e1e1e1; }
.header-row { height: 63px; display: flex; align-items: center; justify-content: space-between; }
.brand { display: flex; align-items: center; gap: 25px; }
.logo { margin-left: 1px; }
.brand-name { padding-bottom: 3px; font: italic 400 24px/30px "Lato", sans-serif; letter-spacing: -.5px; word-spacing: 7px; }
.nav { display: flex; gap: 18px; font-size: 15px; line-height: 24px; font-weight: 300; letter-spacing: -.03px; white-space: nowrap; }

.contact { display: grid; grid-template-columns: 459px 471px; column-gap: 30px; padding-top: 102px; height: 698px; }
.title { margin: 0; font: 400 29px/36px "Liberation Serif", serif; letter-spacing: .09px; white-space: nowrap; }
.intro { margin: 0; font-size: 15px; font-weight: 300; line-height: 23px; white-space: nowrap; }
.l1 { letter-spacing: .16px; }
.l2 { letter-spacing: .22px; }
.l3 { letter-spacing: .1px; }
.form { display: flex; flex-direction: column; margin-top: 47px; }
.label { height: 26px; font-size: 15px; line-height: 23px; font-weight: 700; letter-spacing: -.12px; }
.label-mail { line-height: 25px; letter-spacing: -.22px; }
.req { margin-left: -1px; font-size: 13px; font-weight: 300; letter-spacing: 0; color: #555; }
.field { width: 471px; height: 48px; margin: 0 0 14px; border: 1px solid #8c8f94; border-radius: 4px; background: #fff; }
.field-mail { height: 49px; }
.area { height: 150px; display: block; resize: vertical; }
.send { width: 73px; height: 42px; padding: 0; align-self: center; border: 0; background: #111; color: #fff; font: 700 14px/43px "Liberation Serif", serif; letter-spacing: -.15px; }

.map { display: block; margin: 0 46px; font-family: "Inter", sans-serif; }
.g { fill: #c5e7a7; }
.y { fill: #deebb8; }
.b { fill: #f7f4ec; }
.c { fill: #fdf1de; }
.p { fill: #dbe5dc; }
.river { fill: none; stroke: #8bdaf3; stroke-width: 7; }
.rail { fill: none; stroke: #d6d6d4; stroke-width: 3; stroke-dasharray: 8 5; }
.street path { fill: none; stroke: #fff; stroke-width: 8.5; stroke-linecap: round; stroke-linejoin: round; }
.street { filter: drop-shadow(0 0 1.5px #ddd9cf); }
.slip { fill: none; stroke: #c2c2c5; stroke-width: 6; }
.trunk { fill: none; stroke: #c9cacc; stroke-width: 15; }
.trunk-top { fill: none; stroke: #dedfe0; stroke-width: 10; }
.mway { fill: none; stroke: #aeafb3; stroke-width: 28; }
.mway-side { stroke-width: 14; }
.mway-line { fill: none; stroke: #989a9f; stroke-width: 2.5; }
.arrows { fill: none; stroke: #9c9ca1; stroke-width: 3; }
.road { fill: #47474c; stroke: #f7f4ec; stroke-width: 4; paint-order: stroke; }
.lg { font-size: 23px; font-weight: 600; }
.sm { font-size: 19px; font-weight: 500; }
.road .river-name { fill: #4f93c2; font-size: 22px; font-style: italic; }
.poi { font-size: 24px; font-weight: 600; stroke: #fdfaf3; stroke-width: 4; paint-order: stroke; }
.area-name { font: 700 35px "Roboto", sans-serif; fill: #77777a; stroke: #f7f4ec; stroke-width: 4; paint-order: stroke; }
.shield { fill: #ffc417; stroke: #d39a16; stroke-width: 3; }
.shield .dk { stroke: #5b4a18; }
.shield text { font-size: 23px; font-weight: 700; text-anchor: middle; fill: #4b3a0d; stroke: none; }
.blue { fill: #2c67d3; stroke: #94b7ef; }
.blue text { fill: #fff; }
.pin-name { font-size: 25px; font-weight: 600; text-anchor: middle; fill: #444; stroke: #f8f6ef; stroke-width: 5; paint-order: stroke; }
.mapas { font-size: 45px; font-weight: 400; fill: #3b3b3b; }
.legal { font-size: 19px; font-weight: 500; fill: #444; }
.north { font-size: 30px; font-weight: 500; fill: #444; }

.subscribe { position: absolute; left: 1885px; top: 1089px; width: 120px; height: 27px; display: flex; align-items: center; padding: 0 8px 0 10px; border: 1px solid #ddd; background: #fff; }
.sub-text { margin: 0 17px 0 6px; font-size: 10px; color: #666; letter-spacing: -.25px; }
.corner { position: absolute; left: 0; top: 1118px; }
```
